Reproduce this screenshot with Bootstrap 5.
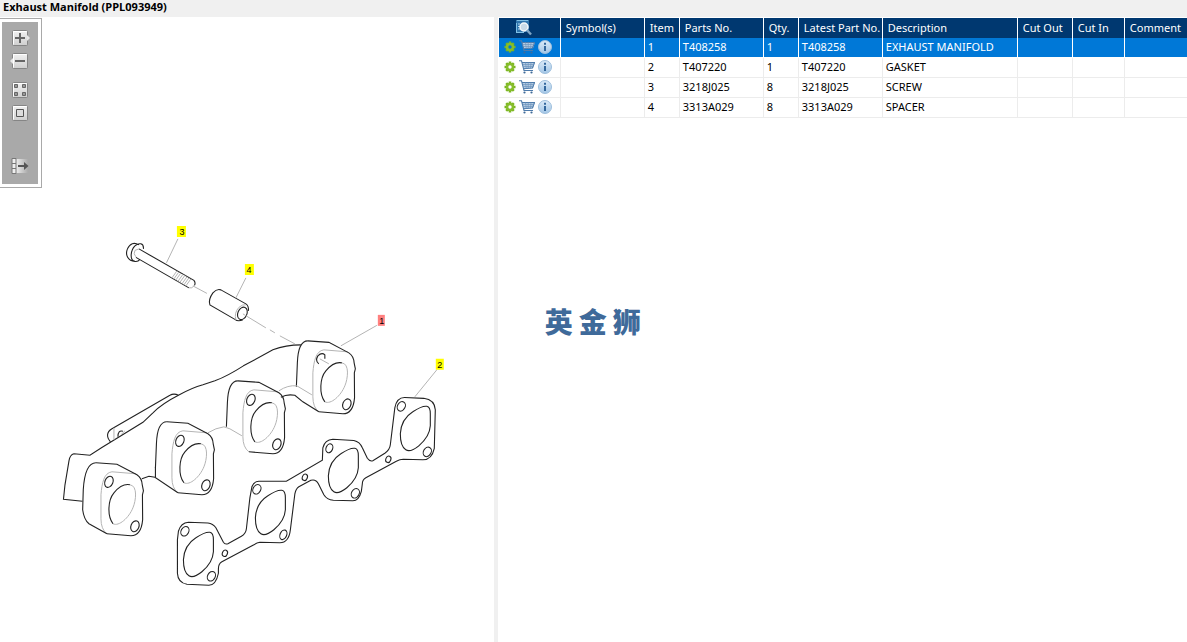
<!DOCTYPE html>
<html lang="en">
<head>
<meta charset="utf-8">
<meta name="viewport" content="width=device-width, initial-scale=1">
<title>Exhaust Manifold (PPL093949)</title>
<link href="https://cdn.jsdelivr.net/npm/bootstrap@5.3.0/dist/css/bootstrap.min.css" rel="stylesheet">
<style>
  body { font-family: "Noto Sans", "Open Sans", sans-serif; font-size: 11px; line-height: 16px; color: #000; background: #fff; }
  .title-bar { background: #f0f0f0; height: 17px; padding-left: 3px; font-family: "Open Sans", "Noto Sans", sans-serif; font-weight: 700; line-height: 14px; }
  .drawing-pane { flex: 0 0 41.6%; }
  .splitter { flex: 0 0 4px; background: #f0f0f0; }
  .parts-pane { padding: 1px 0 0 1px; }
  .drawing-pane > svg { width: 100%; height: auto; }
  .toolbox { top: 1px; left: 0; border: 1px solid #a9a9a9; border-left: 0; background: #fff; padding: 3px 3px 3px 2px; }
  .toolbox-inner { background: #a9a9a9; width: 36px; padding: 7px 0 9px; gap: 5px; }
  .tool { border: 0; background: none; padding: 0; width: 20px; height: 18px; line-height: 0; }
  .tool svg { width: 20px; height: 18px; }
  .tool-group { margin-top: 6px; }
  .tool-last { margin-top: 30px; }
  .parts { table-layout: fixed; width: 100%; border-collapse: separate; border-spacing: 0; white-space: nowrap; }
  .parts col:nth-child(1) { width: 62px; }
  .parts col:nth-child(2), .parts col:nth-child(4), .parts col:nth-child(6) { width: 84px; }
  .parts col:nth-child(3), .parts col:nth-child(5) { width: 35px; }
  .parts col:nth-child(7) { width: 135px; }
  .parts col:nth-child(8) { width: 55px; }
  .parts col:nth-child(9) { width: 52px; }
  .parts th, .parts td { height: 20px; padding: 0 0 0 3px; border-right: 1px solid #ececec; border-bottom: 1px solid #ececec; line-height: 18px; vertical-align: top; overflow: hidden; }
  .parts th { background: #003870; color: #fff; font-weight: 400; border-bottom: 0; border-right-color: #fff; padding-left: 5px; line-height: 20px; }
  .parts th:last-child, .parts td:last-child { border-right: 0; }
  .parts .picked { --hole: #0078d7; }
  .parts .picked td { background: #0078d7; color: #fff; border-right-color: #fff; border-bottom-color: #fff; }
  .parts th.finder { padding: 0 10px 0 0; text-align: center; }
  .acts { gap: 3px; padding-left: 2px; }
  .act { border: 0; background: none; padding: 0; height: 18px; line-height: 0; }
  .act svg { display: block; }
  .brand-mark { font-family: "Noto Sans CJK SC", sans-serif; font-weight: 900; font-size: 28px; line-height: 40px; color: #3f6a9a; gap: 6px; margin: 183px 0 0 46px; }
  .ln { fill: none; stroke: #222; stroke-width: 1.1; }
  .gr { fill: none; stroke: #b4b4b4; stroke-width: 1; }
  .tag { font-family: "Liberation Sans", Arial, sans-serif; font-size: 9px; text-anchor: middle; }
</style>
</head>
<body class="d-flex flex-column min-vh-100">
<svg width="0" height="0" class="position-absolute" aria-hidden="true">
  <defs>
    <linearGradient id="btnFace" x2="0" y2="1"><stop stop-color="#f2f2f2"/><stop offset="1" stop-color="#cfcfcf"/></linearGradient>
    <linearGradient id="fadeFace"><stop stop-color="#eee"/><stop offset="1" stop-color="#a9a9a9"/></linearGradient>
    <linearGradient id="infoFace" x2="0" y2="1"><stop stop-color="#dcebf8"/><stop offset="1" stop-color="#a3c6e6"/></linearGradient>
    <symbol id="gear" viewBox="0 0 12 12">
      <path d="M6 .5v11M.5 6h11M2.200 2.200l7.600 7.600M9.800 2.200l-7.600 7.600" stroke="#7ab51f" stroke-width="2.600"/>
      <circle cx="6" cy="6" r="4.200" fill="#86bd2a"/><circle cx="6" cy="6" r="1.700" fill="var(--hole, #fff)"/>
    </symbol>
    <symbol id="cart" viewBox="0 0 16 14">
      <path d="M3 2.500h13l-2 5.500-9 1z" fill="#b5cce2"/>
      <path d="M0 .8h2.500L5 10.500h9M3 2.500h12.500l-2 5.500-9 .8" fill="none" stroke="#4e7bab" stroke-width="1.100"/>
      <path d="M3.800 4.500h11M4.300 6.500h10M6.500 2.500l.8 6M9.200 2.500v6M12 2.500l-.5 6" fill="none" stroke="#6d94bd" stroke-width=".7"/>
      <circle cx="5.500" cy="12.500" r="1.100" fill="#3f6a98"/><circle cx="12.500" cy="12.500" r="1.100" fill="#3f6a98"/>
    </symbol>
    <symbol id="info" viewBox="0 0 14 14">
      <circle cx="7" cy="7" r="6.500" fill="url(#infoFace)" stroke="#9dbedc"/>
      <path d="M6 2.800h2v2H6zM6 6h2v5H6z" fill="#34689d"/>
    </symbol>
    <symbol id="face" viewBox="0 0 20 18"><rect x="2.500" y="1.500" width="15" height="15" rx="1" fill="url(#btnFace)" stroke="#858585"/><path d="M3.500 15.500v-13h13" fill="none" stroke="#fff"/></symbol>
  </defs>
</svg>

<header class="title-bar">Exhaust Manifold (PPL093949)</header>

<main class="d-flex flex-grow-1">
  <section class="drawing-pane position-relative" aria-label="Drawing">
    <svg class="d-block" viewBox="0 17 494 625" role="img" aria-label="Exploded view of the exhaust manifold">
      <defs>
        <g id="flange">
          <path class="gr" d="M107 534C103 531 101 526 101 519L101 495C102 483 104 473 112 472L136 474"/>
          <path class="ln" d="M96 463L117 464.500L137 475C140 477 142 480 142.300 485L143.500 491L142.500 495L142.700 520C142 528 139 536 131 536L107 534"/>
          <ellipse class="ln" cx="135" cy="526.500" rx="4" ry="5.600" transform="rotate(22 135 526.500)"/>
          <path class="gr" d="M130 485C138 486 136 501 133 508C129 518 119 527 113 524"/>
          <path class="ln" d="M113 524C107 516 108 500 114 493C119 487 125 484 130 485"/>
        </g>
        <ellipse id="bolt-hole" class="ln" cx="109" cy="482" rx="4" ry="5.800" transform="rotate(22 109 482)"/>
        <path id="wall" class="ln" d="M84.500 509L85.500 485C86 471 89 463 96 463"/>
        <path id="port" class="ln" d="M183.500 560C184 551 188 543 196 538C202 534 207 532 210 532.500C213 533 213.500 536 213.500 540V552C213 560 208 567 202 572C197 576 192 578 189 576C184 573 183.500 566 183.500 560Z"/>
      </defs>

      <!-- manifold body -->
      <path class="ln" d="M82.500 501.500L63.500 499.500L65 485L69 461Q70 455 74 454L90 455.500L101.500 448L143 422.500L153 413Q162 404 178.500 395.500Q192 388 203 385L215 381Q228 376 243.500 366L273 350Q286 345 301 345"/>
      <path class="ln" d="M110.500 442Q104 434 112 429L170 395.500Q174 393 178.500 395.500M118 437Q118 430 123 431.500"/>
      <path class="gr" d="M114 440V428M121 435l4-4"/>
      <use href="#flange"/><use href="#bolt-hole"/>
      <path class="ln" d="M107 534L89 524Q84 520 82.700 510L83.300 490Q85 463 96 463"/>
      <use href="#flange" x="71" y="-41"/><use href="#bolt-hole" x="71" y="-41"/><use href="#wall" x="71" y="-41"/>
      <use href="#flange" x="142" y="-82"/><use href="#bolt-hole" x="142" y="-82"/><use href="#wall" x="142" y="-82"/>
      <use href="#flange" x="212" y="-122"/><use href="#wall" x="212" y="-122"/>
      <path class="ln" d="M155.500 467V477.500M319 364Q315 361 318 356Q322 352 325 355V359"/>
      <path class="ln" d="M142 479L149 476.500L155 477.500L178 493M281 397.500Q287 394 295 395.500L303 402L319 412"/>
      <path class="gr" d="M208 433Q216 428 224 427L230 429L242 436M279 391Q288 385 297 386L312 395"/>

      <!-- screw -->
      <path class="ln" d="M135 261.500C128 261 125 255 127.500 249C130 243.500 134 242 139 245M135 261.500C129 260 131 250 135 246C139 242.500 144 243 143.500 249M139 249L194 280.500Q196 283 194.500 285.500M189 288L136 257.500M135 261.500Q138 262 140 259.500"/>
      <path class="gr" d="M194.500 285.500Q192 289 189 288M136 257Q133 254 135 250.500L139 249M172 278l5-7M174 279l5-7M176 280l5-7M178 281.500l5-7M180 282.500l5-7M182 284l5-7M184 285l5-7M186 286l5-7"/>

      <!-- spacer -->
      <path class="ln" d="M235 319.500L210 305Q208 300 213 293Q217 288.500 221 290L246 304Q249 306 248.500 311M235 319.500Q238 322 243 320"/>
      <ellipse class="ln" cx="242.500" cy="313.500" rx="4.500" ry="6.500" transform="rotate(24 242.500 313.500)"/>
      <path class="gr" d="M236 320Q234 313 239 307.500Q243 304 246 305"/>

      <!-- centre line and leaders -->
      <path class="gr" d="M193 286L207 293.500M243 314L266 328M270 330L275 333M280 336L295 344M320 359L329 364M178 239L166.500 263M246 278L236 298M377 325.500L341 346M437 370L415 397"/>

      <!-- gasket -->
      <path class="ln" d="M177.500 540L178.500 531.500Q181 523 188.500 522.500L208 523.300Q213 524 216 528L223.500 542.500Q225 545 228 544L241.500 536.500Q246 534 246.500 529L250 498L252 487Q254 481.500 259 481.500H286.500L322.500 460.500L323 448Q325 440 333 439.500L354 440.700Q360 442 362.500 448L367.500 458.500Q370 462 373 461L385 453.500Q390 450 390.500 445L395 408Q397 397.500 405 397.700L424 398.500Q435 400 435.500 410L434.500 448.500Q432 460 423 460L403.500 459.500Q400 459.500 396.500 461.500L366 478Q362.500 480 362.500 484L361.500 491.500Q359 501 353 501L333.500 500.500Q327 500 324 495L318.500 484Q316 479 311 480.500L299 487Q296 489 295 494L290.500 530Q289 543 280 543L260 542.500Q257 543 254 545L222 562Q218.500 564 218.500 569V573.500Q216 585.500 209 585.500L187 584.500Q178 583 177.500 573.500Z"/>
      <use href="#port"/><use href="#port" x="72" y="-42"/><use href="#port" x="145" y="-84"/><use href="#port" x="217" y="-126"/>
      <g class="ln">
        <ellipse cx="185" cy="531.500" rx="3.800" ry="5" transform="rotate(28 185 531.500)"/><ellipse cx="211.500" cy="576.500" rx="3.800" ry="5" transform="rotate(28 211.500 576.500)"/>
        <ellipse cx="257" cy="489.500" rx="3.800" ry="5" transform="rotate(28 257 489.500)"/><ellipse cx="283.500" cy="535" rx="3.300" ry="5" transform="rotate(22 283.500 535)"/>
        <ellipse cx="329.500" cy="448.500" rx="3.300" ry="4.600" transform="rotate(22 329.500 448.500)"/><ellipse cx="355.500" cy="493.500" rx="3.800" ry="5" transform="rotate(28 355.500 493.500)"/>
        <ellipse cx="401.500" cy="406.500" rx="3.800" ry="5" transform="rotate(28 401.500 406.500)"/><ellipse cx="427.500" cy="452" rx="3.800" ry="5" transform="rotate(28 427.500 452)"/>
        <ellipse cx="225" cy="553.500" rx="2.500" ry="3.300" transform="rotate(22 225 553.500)"/><ellipse cx="305" cy="477.500" rx="2.500" ry="3.300" transform="rotate(22 305 477.500)"/><ellipse cx="388.500" cy="459.500" rx="2.500" ry="3.300" transform="rotate(22 388.500 459.500)"/>
      </g>

      <!-- item numbers -->
      <path d="M177 226h9v11h-9zM245 264h9v11h-9zM436 359h8v11h-8z" fill="#ff0"/><path d="M378 315h7v11h-7z" fill="#ff8080"/>
      <g class="tag"><text x="182" y="235">3</text><text x="249" y="273">4</text><text x="382" y="324">1</text><text x="440" y="368">2</text></g>
    </svg>

    <div class="toolbox position-absolute">
      <div class="toolbox-inner d-flex flex-column align-items-center">
        <button class="tool" aria-label="Zoom in"><svg><use href="#face"/><path d="M17 6l3 3-3 3z" fill="#e8e8e8"/><path d="M10 4v10M5 9h10" stroke="#666" stroke-width="2"/></svg></button>
        <button class="tool" aria-label="Zoom out"><svg><use href="#face"/><path d="M3 6L0 9l3 3z" fill="#e8e8e8"/><path d="M5 9h10" stroke="#666" stroke-width="2"/></svg></button>
        <button class="tool tool-group" aria-label="Fit all"><svg><use href="#face"/><path d="M4.500 3.500h3v3h-3zM12.500 3.500h3v3h-3zM4.500 11.500h3v3h-3zM12.500 11.500h3v3h-3z" fill="#999" stroke="#666"/></svg></button>
        <button class="tool" aria-label="Actual size"><svg><use href="#face"/><path d="M6.500 5.500h7v7h-7z" fill="#ddd" stroke="#555"/></svg></button>
        <button class="tool tool-last" aria-label="Hide list"><svg><path d="M6 2h12v14H6z" fill="url(#fadeFace)"/><path d="M2 1.500h4v15H2zM2 6.500h4M2 11.500h4" fill="#eee" stroke="#777"/><path d="M8 9h7" stroke="#555" stroke-width="2"/><path d="M14 5l4.500 4-4.500 4z" fill="#555"/></svg></button>
      </div>
    </div>
  </section>

  <div class="splitter"></div>

  <section class="parts-pane flex-grow-1 overflow-hidden" aria-label="Parts list">
    <table class="parts">
      <colgroup><col><col><col><col><col><col><col><col><col><col></colgroup>
      <thead><tr>
        <th class="finder"><button class="act align-top" aria-label="Search parts"><svg width="18" height="18"><path d="M1 3h13v11H1z" fill="#2f75ae"/><path d="M1.500 2.500h12M1.500 5v10M2 14.500h7" stroke="#7fc0e6" fill="none"/><path d="M3 6h2M3 8.500h2M3 11h2" stroke="#b7dcf2"/><circle cx="9" cy="9" r="4" fill="#c9dbe8" stroke="#f4f8fa" stroke-width="1.500"/><path d="M12 12l4 4.500" stroke="#7fa6c6" stroke-width="2.400"/></svg></button></th>
        <th>Symbol(s)</th><th>Item</th><th>Parts No.</th><th>Qty.</th><th>Latest Part No.</th><th>Description</th><th>Cut Out</th><th>Cut In</th><th>Comment</th>
      </tr></thead>
      <tbody>
        <tr class="picked"><td><div class="acts d-flex"><button class="act" aria-label="Configure item 1"><svg width="12" height="12"><use href="#gear"/></svg></button><button class="act" aria-label="Add item 1 to cart"><svg width="16" height="14"><use href="#cart"/></svg></button><button class="act" aria-label="About item 1"><svg width="14" height="14"><use href="#info"/></svg></button></div></td><td></td><td>1</td><td>T408258</td><td>1</td><td>T408258</td><td>EXHAUST MANIFOLD</td><td></td><td></td><td></td></tr>
        <tr><td><div class="acts d-flex"><button class="act" aria-label="Configure item 2"><svg width="12" height="12"><use href="#gear"/></svg></button><button class="act" aria-label="Add item 2 to cart"><svg width="16" height="14"><use href="#cart"/></svg></button><button class="act" aria-label="About item 2"><svg width="14" height="14"><use href="#info"/></svg></button></div></td><td></td><td>2</td><td>T407220</td><td>1</td><td>T407220</td><td>GASKET</td><td></td><td></td><td></td></tr>
        <tr><td><div class="acts d-flex"><button class="act" aria-label="Configure item 3"><svg width="12" height="12"><use href="#gear"/></svg></button><button class="act" aria-label="Add item 3 to cart"><svg width="16" height="14"><use href="#cart"/></svg></button><button class="act" aria-label="About item 3"><svg width="14" height="14"><use href="#info"/></svg></button></div></td><td></td><td>3</td><td>3218J025</td><td>8</td><td>3218J025</td><td>SCREW</td><td></td><td></td><td></td></tr>
        <tr><td><div class="acts d-flex"><button class="act" aria-label="Configure item 4"><svg width="12" height="12"><use href="#gear"/></svg></button><button class="act" aria-label="Add item 4 to cart"><svg width="16" height="14"><use href="#cart"/></svg></button><button class="act" aria-label="About item 4"><svg width="14" height="14"><use href="#info"/></svg></button></div></td><td></td><td>4</td><td>3313A029</td><td>8</td><td>3313A029</td><td>SPACER</td><td></td><td></td><td></td></tr>
      </tbody>
    </table>
    <div class="brand-mark d-flex" lang="zh"><span>英</span><span>金</span><span>狮</span></div>
  </section>
</main>
<script src="https://cdn.jsdelivr.net/npm/bootstrap@5.3.0/dist/js/bootstrap.bundle.min.js"></script>
</body>
</html>
